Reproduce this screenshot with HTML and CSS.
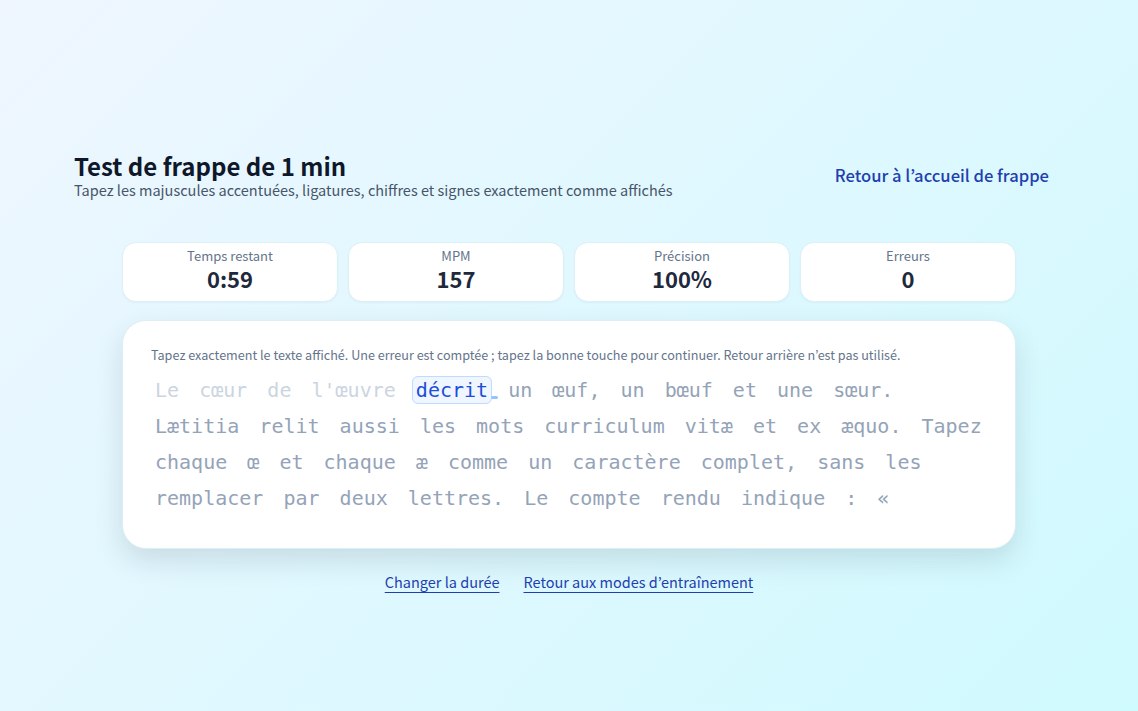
FILE: index.html
```html
<!DOCTYPE html>
<html lang="fr">
<head>
<meta charset="utf-8">
<title>Test de frappe de 1 min</title>
<link rel="stylesheet" href="styles.css">
</head>
<body>
<main class="page">
  <div class="container">
    <header class="header">
      <div class="heading">
        <h1 class="title">Test de frappe de 1 min</h1>
        <p class="subtitle">Tapez les majuscules accentuées, ligatures, chiffres et signes exactement comme affichés</p>
      </div>
      <a class="home-link" href="#">Retour à l’accueil de frappe</a>
    </header>

    <section class="stats">
      <div class="stat"><div class="stat-label">Temps restant</div><div class="stat-value">0:59</div></div>
      <div class="stat"><div class="stat-label">MPM</div><div class="stat-value">157</div></div>
      <div class="stat"><div class="stat-label">Précision</div><div class="stat-value">100%</div></div>
      <div class="stat"><div class="stat-label">Erreurs</div><div class="stat-value">0</div></div>
    </section>

    <section class="typing-card">
      <p class="hint">Tapez exactement le texte affiché. Une erreur est comptée ; tapez la bonne touche pour continuer. Retour arrière n’est pas utilisé.</p>
      <div class="text"><span class="w done">Le</span> <span class="w done">cœur</span> <span class="w done">de</span> <span class="w done">l'œuvre</span> <span class="w current">décrit<span class="caret"></span></span> <span class="w">un</span> <span class="w">œuf,</span> <span class="w">un</span> <span class="w">bœuf</span> <span class="w">et</span> <span class="w">une</span> <span class="w">sœur.</span> <span class="w">Lætitia</span> <span class="w">relit</span> <span class="w">aussi</span> <span class="w">les</span> <span class="w">mots</span> <span class="w">curriculum</span> <span class="w">vitæ</span> <span class="w">et</span> <span class="w">ex</span> <span class="w">æquo.</span> <span class="w">Tapez</span> <span class="w">chaque</span> <span class="w">œ</span> <span class="w">et</span> <span class="w">chaque</span> <span class="w">æ</span> <span class="w">comme</span> <span class="w">un</span> <span class="w">caractère</span> <span class="w">complet,</span> <span class="w">sans</span> <span class="w">les</span> <span class="w">remplacer</span> <span class="w">par</span> <span class="w">deux</span> <span class="w">lettres.</span> <span class="w">Le</span> <span class="w">compte</span> <span class="w">rendu</span> <span class="w">indique</span> <span class="w">:</span> <span class="w">«</span></div>
    </section>

    <nav class="footer-links">
      <a href="#">Changer la durée</a>
      <a href="#">Retour aux modes d’entraînement</a>
    </nav>
  </div>
</main>
</body>
</html>
```

FILE: styles.css
```css
* { box-sizing: border-box; }

html, body {
  margin: 0;
  padding: 0;
}

body {
  min-height: 100vh;
  background: linear-gradient(135deg, #eff6ff 0%, #cffafe 100%);
  font-family: "Noto Sans CJK JP", "Noto Sans", sans-serif;
  color: #0f172a;
}

.page {
  min-height: 711px;
  display: flex;
  justify-content: center;
  align-items: flex-start;
  padding-top: 152px;
}

.container {
  width: 990px;
}

.header {
  display: flex;
  justify-content: space-between;
  align-items: center;
  padding-right: 15px;
  margin-bottom: 42px;
}

.title {
  margin: 0;
  font-size: 24px;
  line-height: 28px;
  font-weight: 700;
  color: #0f172a;
}

.subtitle {
  margin: 0;
  font-size: 14.5px;
  line-height: 20px;
  color: #475569;
}

.home-link {
  font-size: 16.6px;
  font-weight: 500;
  color: #1e40af;
  text-decoration: none;
  margin-top: -2px;
}

.stats {
  width: 894px;
  margin: 0 auto;
  display: grid;
  grid-template-columns: repeat(4, 1fr);
  gap: 10px;
}

.stat {
  height: 60px;
  background: #ffffff;
  border: 1px solid #dcf0f8;
  border-radius: 14px;
  padding: 5px 8px 0;
  text-align: center;
  box-shadow: 0 1px 2px rgba(15, 23, 42, 0.04);
}

.stat-label {
  font-size: 13px;
  line-height: 15px;
  color: #64748b;
}

.stat-value {
  margin-top: 2px;
  font-size: 22px;
  line-height: 26px;
  font-weight: 700;
  color: #1e293b;
}

.typing-card {
  width: 894px;
  margin: 18px auto 0;
  background: #ffffff;
  border: 1px solid #dbeef7;
  border-radius: 24px;
  padding: 25px 28px 32px;
  box-shadow: 0 12px 28px rgba(15, 23, 42, 0.12);
}

.hint {
  margin: 0 0 8px;
  font-size: 12.6px;
  line-height: 18px;
  color: #64748b;
}

.text {
  font-family: "DejaVu Sans Mono", monospace;
  font-size: 20px;
  line-height: 36px;
  color: #94a3b8;
}

.w {
  padding: 1px 3px;
  border: 1px solid transparent;
  border-radius: 6px;
}

.w.done {
  color: #cbd5e1;
}

.w.current {
  position: relative;
  color: #1d4ed8;
  background: #eff6ff;
  border-color: #bfdbfe;
}

.caret {
  position: absolute;
  left: 100%;
  bottom: 4px;
  width: 7px;
  height: 3px;
  border-radius: 2px;
  background: #93c5fd;
}

.footer-links {
  display: flex;
  justify-content: center;
  gap: 24px;
  margin-top: 22px;
}

.footer-links a {
  font-size: 14.5px;
  line-height: 22px;
  color: #1e40af;
  text-decoration: underline;
  text-underline-offset: 4px;
}
```
